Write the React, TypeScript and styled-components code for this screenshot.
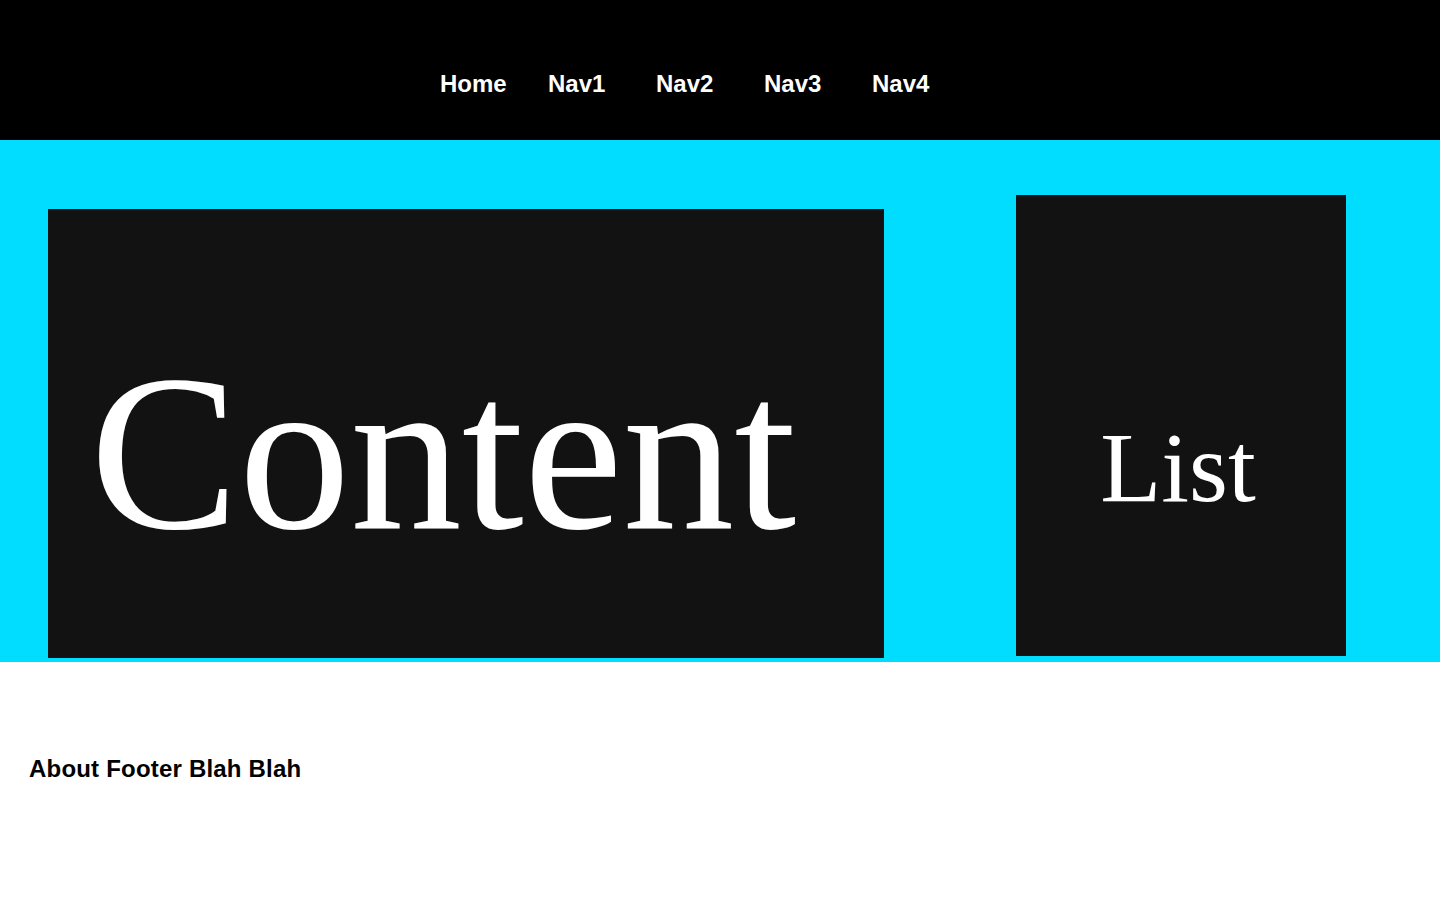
import styled, { createGlobalStyle } from 'styled-components';

const GlobalStyle = createGlobalStyle`
  html, body {
    margin: 0;
    padding: 0;
    background: #ffffff;
  }
  * {
    box-sizing: border-box;
  }
`;

const Header = styled.header`
  height: 140px;
  background-color: #000000;
`;

const NavList = styled.ul`
  display: flex;
  margin: 0;
  padding: 70px 0 0 440px;
  list-style: none;
`;

const NavItem = styled.li`
  width: 108px;
  font-family: 'Liberation Sans', Arial, sans-serif;
  font-weight: bold;
  font-size: 24px;
  color: #ffffff;
`;

const Main = styled.main`
  display: flex;
  align-items: flex-start;
  height: 522px;
  background-color: #00ddff;
`;

const Panel = styled.section<{ $top: number; $left: number; $width: number; $height: number }>`
  margin-top: ${({ $top }) => $top}px;
  margin-left: ${({ $left }) => $left}px;
  width: ${({ $width }) => $width}px;
  height: ${({ $height }) => $height}px;
  background-color: #121212;
  color: #ffffff;
  font-family: 'Liberation Serif', 'Times New Roman', serif;
  line-height: 1;
`;

const ContentPanel = styled(Panel)`
  padding: 132px 0 0 42px;
  font-size: 223px;
`;

const ListPanel = styled(Panel)`
  padding: 223px 6px 0 0;
  text-align: center;
  font-size: 100px;
`;

const Footer = styled.footer`
  padding: 93px 0 0 29px;
  font-family: 'Liberation Sans', Arial, sans-serif;
  font-weight: bold;
  font-size: 24px;
  letter-spacing: 0.2px;
  color: #000000;
`;

const navItems = ['Home', 'Nav1', 'Nav2', 'Nav3', 'Nav4'];

export default function App() {
  return (
    <>
      <GlobalStyle />
      <Header>
        <NavList>
          {navItems.map((item) => (
            <NavItem key={item}>{item}</NavItem>
          ))}
        </NavList>
      </Header>
      <Main>
        <ContentPanel $top={69} $left={48} $width={836} $height={449}>
          Content
        </ContentPanel>
        <ListPanel $top={55} $left={132} $width={330} $height={461}>
          List
        </ListPanel>
      </Main>
      <Footer>About Footer Blah Blah</Footer>
    </>
  );
}
